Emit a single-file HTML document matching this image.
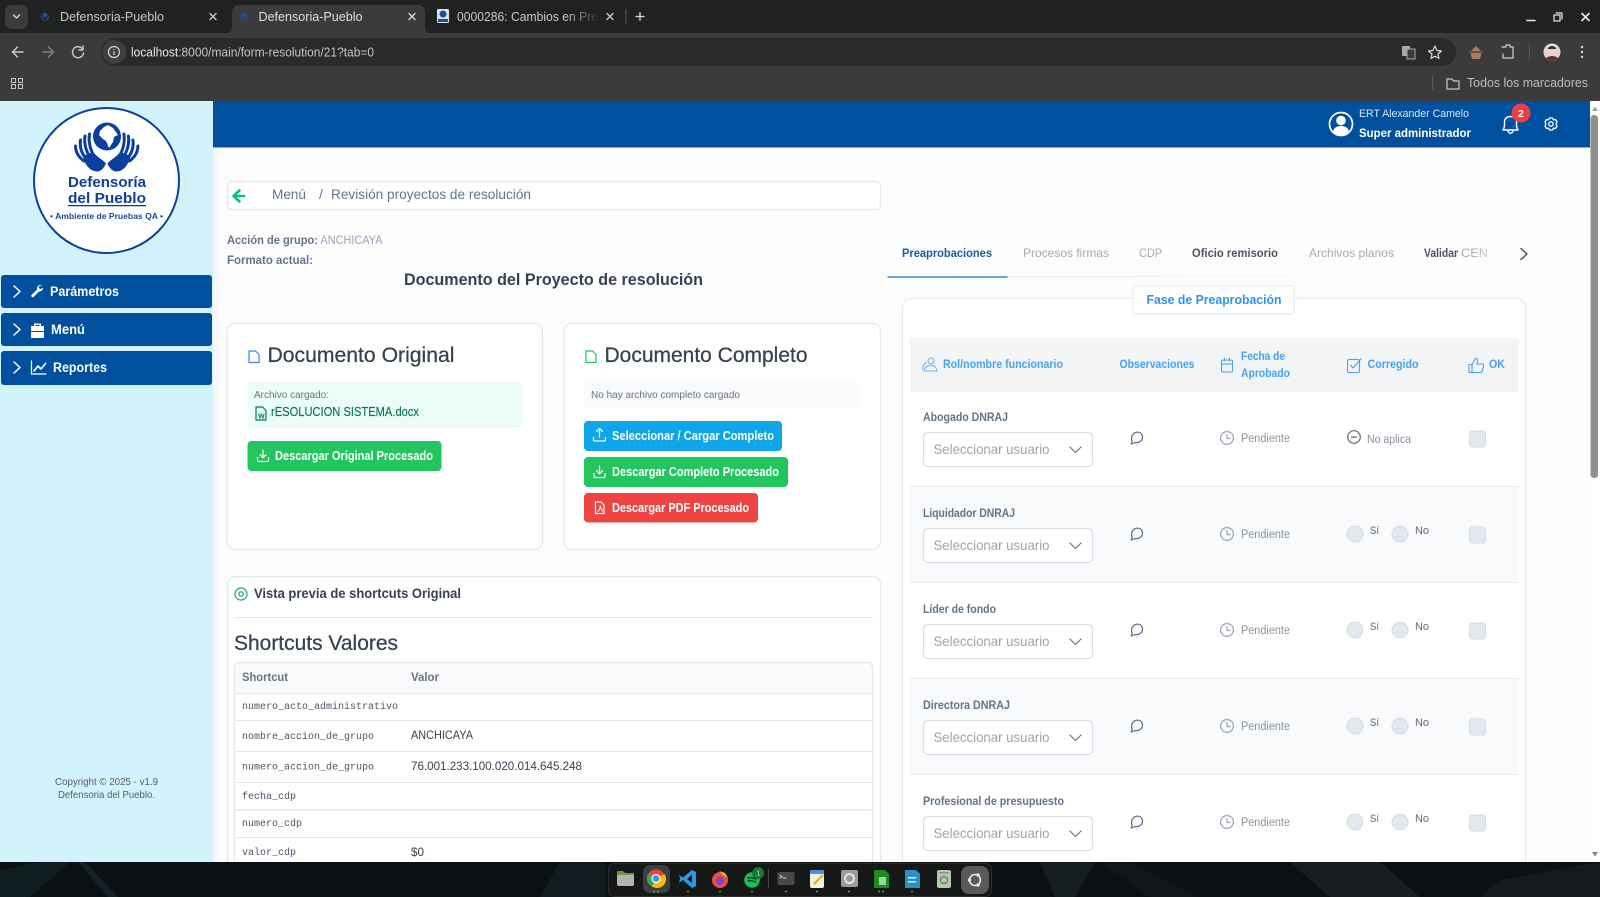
<!DOCTYPE html>
<html lang="es"><head><meta charset="utf-8"><title>Defensoria-Pueblo</title>
<style>
html,body{margin:0;padding:0;width:1600px;height:897px;overflow:hidden;background:#fff}
svg{display:block}
text{font-family:"Liberation Sans",sans-serif;white-space:pre}
.m{font-family:"Liberation Mono",monospace;font-size:10px;fill:#4b5563}
.b{font-weight:700}
.s{fill:none;stroke-linecap:round;stroke-linejoin:round}
.hd{font-size:11.5px;font-weight:700;fill:#45a2f5}
.lb{font-size:11.5px;font-weight:700;fill:#64748b}
.ph{font-size:14px;fill:#9ca3af}
.pe{font-size:11.5px;fill:#8b93a0}
.rd{font-size:11px;fill:#5f6875}
.tb{font-size:12px;font-weight:700}
.wb{font-size:12.5px;font-weight:700;fill:#fff}
.ch{font-size:12.5px;fill:#c8c8c8}
.tv{font-size:12px;fill:#374151}
</style></head><body>
<svg width="1600" height="897" viewBox="0 0 1600 897" xmlns="http://www.w3.org/2000/svg">
<defs>
<linearGradient id="fade" x1="0" x2="1"><stop offset="0" stop-color="#e5e7eb"/><stop offset="1" stop-color="#fff"/></linearGradient>
<linearGradient id="tabf" x1="0" x2="1"><stop offset="0" stop-color="#202221" stop-opacity="0"/><stop offset="1" stop-color="#202221"/></linearGradient>
<linearGradient id="cenf" x1="0" x2="1"><stop offset="0" stop-color="#fff" stop-opacity="0"/><stop offset="1" stop-color="#fff"/></linearGradient>
<g id="cm"><path class="s" stroke="#64748b" stroke-width="1.300" d="M1.600 12.400 2.600 9.400C1.200 6.200 2.600 2.200 6 1 9.600-.2 13 2 13 5.600 13 9.500 9.200 11.800 5.600 10.900 4.400 11.600 3 12.200 1.600 12.400Z"/></g>
<g id="ck"><circle cx="0" cy="0" r="6.400" fill="none" stroke="#9ca3af" stroke-width="1.200"/><path class="s" stroke="#9ca3af" stroke-width="1.200" d="M0-3.500V.5H3"/></g>
<g id="sel">
<rect x=".5" y=".5" width="169" height="34" rx="4.500" fill="#fff" stroke="#d8dee8" stroke-width="1.200"/>
<text class="ph" x="10.500" y="22" textLength="116" lengthAdjust="spacingAndGlyphs">Seleccionar usuario</text>
<path class="s" stroke="#6b7280" stroke-width="1.200" d="M147 15 152.500 20.500 158 15"/>
</g>
<g id="row">
<use href="#sel" x="923" y="432"/>
<use href="#cm" x="1129.500" y="431.500"/>
<use href="#ck" x="1227" y="438"/>
<text class="pe" x="1241" y="442" textLength="49" lengthAdjust="spacingAndGlyphs">Pendiente</text>
<rect x="1469.500" y="431" width="16" height="16" rx="2.500" fill="#e2e8f0" stroke="#d5dce6"/>
</g>
<g id="rad">
<circle cx="1355" cy="438" r="8" fill="#e2e8f0" stroke="#d5dce6"/>
<text class="rd" x="1370" y="438" textLength="9" lengthAdjust="spacingAndGlyphs">Sí</text>
<circle cx="1400" cy="438" r="8" fill="#e2e8f0" stroke="#d5dce6"/>
<text class="rd" x="1415" y="438" textLength="14" lengthAdjust="spacingAndGlyphs">No</text>
</g>
<g id="dl"><path class="s" stroke="#fff" stroke-width="1.200" d="M6 0V7.500M3 4.800 6 7.800 9 4.800M.5 7.500V10.500Q.5 11.500 1.500 11.500H10.500Q11.500 11.500 11.500 10.500V7.500"/></g>
<g id="fav"><path fill="#1b4f9c" d="M5 1.500a2.500 2.500 0 1 1 0 5 2.500 2.500 0 0 1 0-5ZM.5 4C1 7.500 2.500 10 4.800 10.500 3.500 8.500 2.800 6.500.5 4ZM9.500 4C9 7.500 7.500 10 5.200 10.500 6.500 8.500 7.200 6.500 9.500 4Z"/></g>
<g id="hand">
<path fill="#0a3f9f" d="M83 156C85 166 91 171.500 97 171.500 101 171.500 104 168 106 163.500 102 159 97 157 93 152Z"/>
<g fill="none" stroke="#0a3f9f" stroke-width="3" stroke-linecap="round">
<path d="M93.500 155C89.500 148 88.500 140 89.500 134"/>
<path d="M90 157C85.500 150 84 143 85 136"/>
<path d="M86.500 159C81 153 79.500 147 80.500 140"/>
<path d="M84 161C78.500 157 75.500 152 75.500 146"/>
</g>
</g>
</defs>

<!-- Page bg -->
<rect width="1600" height="897" fill="#fdfdfe"/>

<!-- Chrome -->
<rect width="1600" height="34" fill="#202221"/>
<rect y="33" width="1600" height="68" fill="#3b3b3b"/>
<rect x="5" y="5" width="23" height="24" rx="7" fill="#3c3c3c"/>
<path class="s" stroke="#d0d0d0" stroke-width="1.500" d="M13.500 15 16.500 18 19.500 15"/>
<use href="#fav" x="40" y="11"/>
<text class="ch" x="60" y="21" textLength="104" lengthAdjust="spacingAndGlyphs">Defensoria-Pueblo</text>
<path class="s" stroke="#c8c8c8" stroke-width="1.400" d="M210 13.500 216 19.500M216 13.500 210 19.500"/>
<path d="M224 34Q232 34 232 26V13Q232 5 240 5H417Q425 5 425 13V26Q425 34 433 34Z" fill="#3b3b3b"/>
<use href="#fav" x="239" y="11"/>
<text class="ch" x="258.500" y="21" textLength="104" lengthAdjust="spacingAndGlyphs" style="fill:#dedede">Defensoria-Pueblo</text>
<path class="s" stroke="#d8d8d8" stroke-width="1.400" d="M409 13.500 415 19.500M415 13.500 409 19.500"/>
<rect x="437" y="9" width="12" height="14" rx="1.500" fill="#d9e4f2"/><circle cx="443" cy="14" r="3.500" fill="#1b4f9c"/><rect x="438" y="19" width="10" height="3" fill="#1b4f9c"/>
<text class="ch" x="457" y="21" textLength="141" lengthAdjust="spacingAndGlyphs">0000286: Cambios en Pre</text>
<rect x="565" y="8" width="35" height="20" fill="url(#tabf)"/>
<path class="s" stroke="#c8c8c8" stroke-width="1.400" d="M607 13.500 613 19.500M613 13.500 607 19.500"/>
<rect x="625.500" y="9" width="1" height="15" fill="#5a5a5a"/>
<path class="s" stroke="#dadada" stroke-width="1.300" d="M640 12.500V20.500M636 16.500H644"/>
<path class="s" stroke="#e8e8e8" stroke-width="1.600" d="M1527 20.500H1535"/>
<rect x="1554" y="15" width="6" height="6" fill="none" stroke="#e8e8e8" stroke-width="1.200"/><path class="s" stroke="#e8e8e8" stroke-width="1.200" d="M1556 13H1562V19"/>
<path class="s" stroke="#e8e8e8" stroke-width="1.600" d="M1582 13.500 1589 20.500M1589 13.500 1582 20.500"/>

<path class="s" stroke="#c9c9c9" stroke-width="1.400" d="M23 52H13M17.500 47 12.500 52 17.500 57"/>
<path class="s" stroke="#808080" stroke-width="1.400" d="M43 52H53M48.500 47 53.500 52 48.500 57"/>
<path class="s" stroke="#c9c9c9" stroke-width="1.400" d="M82.500 49A5.500 5.500 0 1 0 83.500 53M83 46V50H79"/>
<rect x="101" y="38" width="1355" height="28" rx="14" fill="#292a2a"/>
<circle cx="114" cy="52" r="12" fill="#3f3f3f"/>
<circle cx="114" cy="52" r="5.500" fill="none" stroke="#d8d8d8" stroke-width="1.200"/><path stroke="#d8d8d8" stroke-width="1.200" d="M114 51V55M114 49V50"/>
<text x="131" y="56.500" font-size="12.500" textLength="243" lengthAdjust="spacingAndGlyphs" fill="#c4c4c4"><tspan fill="#e8e8e8">localhost</tspan>:8000/main/form-resolution/21?tab=0</text>
<rect x="1402" y="46" width="8" height="10" fill="#a8a8a8"/><rect x="1407" y="49" width="8" height="10" fill="#3a3a3a" stroke="#a8a8a8"/>
<path class="s" stroke="#d8d8d8" stroke-width="1.200" d="M1435 46 1437 50.500 1441.500 51 1438 54 1439 58.500 1435 56.200 1431 58.500 1432 54 1428.500 51 1433 50.500Z"/>
<path fill="#a8805f" d="M1470 52 1476 46 1482 52 1480 59H1472Z"/><rect x="1469" y="51" width="14" height="2" fill="#6d4a3a"/>
<path class="s" stroke="#cfcfcf" stroke-width="1.200" d="M1502 47H1506V45H1510V47H1513V58H1503V54"/>
<rect x="1529" y="44" width="1" height="16" fill="#555"/>
<circle cx="1552" cy="52" r="8.500" fill="#e6d6cc"/><path fill="#6b2a2a" d="M1546 58Q1552 54 1558 58 1552 63 1546 58Z"/><path fill="#3a2a24" d="M1548 48Q1552 44 1556 48V49H1548Z"/>
<circle cx="1582" cy="47" r="1.200" fill="#d5d5d5"/><circle cx="1582" cy="52" r="1.200" fill="#d5d5d5"/><circle cx="1582" cy="57" r="1.200" fill="#d5d5d5"/>

<g fill="none" stroke="#c8c8c8" stroke-width="1"><rect x="11.500" y="78.500" width="4" height="4"/><rect x="18.500" y="78.500" width="4" height="4"/><rect x="11.500" y="84.500" width="4" height="4"/><rect x="18.500" y="84.500" width="4" height="4"/></g>
<rect x="1432" y="76" width="1" height="14" fill="#5a5a5a"/>
<path class="s" stroke="#c8c8c8" stroke-width="1.200" d="M1447 79H1452L1453.500 81H1459V89H1447Z"/>
<text x="1467" y="87" font-size="12.500" fill="#bdbdbd" textLength="121" lengthAdjust="spacingAndGlyphs">Todos los marcadores</text>

<!-- Sidebar -->
<rect x="0" y="101" width="213" height="761" fill="#d3f3fc"/>
<rect x="213" y="147" width="6" height="715" fill="#f7f7fa"/>
<!-- Logo -->
<circle cx="106.500" cy="180.500" r="72.500" fill="#fff" stroke="#0f3f9b" stroke-width="2"/>
<use href="#hand"/>
<use href="#hand" transform="translate(213.400 0) scale(-1 1)"/>
<circle cx="107" cy="136.500" r="14" fill="#0a3f9f"/>
<path fill="#fff" d="M104 127 108 125 113 128 118 135 114 137 113 142 109 148 106 141 103 139 99 135 100 131Z"/>
<text x="68" y="187" font-size="15" class="b" fill="#0f3f9b" textLength="78" lengthAdjust="spacingAndGlyphs">Defensoría</text>
<text x="68" y="203" font-size="15" class="b" fill="#0f3f9b" textLength="78" lengthAdjust="spacingAndGlyphs">del Pueblo</text>
<rect x="68" y="205" width="78" height="1.300" fill="#0f3f9b"/>
<text x="50" y="219" font-size="8" class="b" fill="#1a4a9f" textLength="113" lengthAdjust="spacingAndGlyphs">• Ambiente de Pruebas QA •</text>

<g fill="#00509d">
<rect x="1" y="275" width="211" height="33" rx="3"/>
<rect x="1" y="313" width="211" height="33" rx="3"/>
<rect x="1" y="351" width="211" height="34" rx="3"/>
</g>
<g class="s" stroke="#fff" stroke-width="1.500" fill="none">
<path d="M14 286 20 291.500 14 297"/><path d="M14 324 20 329.500 14 335"/><path d="M14 362 20 367.500 14 373"/>
</g>
<path fill="#fff" d="M42 285C39.500 284.300 37 286 37 288.500L37 289.600 31.500 295C30.500 296 32.500 298 33.500 297L39 291.500C41 291.700 43 290 43.200 287.500L41 289 39 288.500 38.800 286.500Z"/>
<text x="50" y="296" font-size="13.500" class="b" fill="#fff" textLength="69" lengthAdjust="spacingAndGlyphs">Parámetros</text>
<path fill="#fff" d="M31 326H44V338H31ZM34 326V323.500H41V326H39.500V325H35.500V326Z"/><rect x="31" y="331" width="13" height="1" fill="#00509d"/>
<text x="51" y="334" font-size="13.500" class="b" fill="#fff" textLength="34" lengthAdjust="spacingAndGlyphs">Menú</text>
<path class="s" stroke="#fff" stroke-width="1.200" d="M31.500 361V374H46"/><path class="s" stroke="#fff" stroke-width="1.600" d="M34 371 38 366 41 369 45.500 363.500"/>
<text x="53" y="372" font-size="13.500" class="b" fill="#fff" textLength="54" lengthAdjust="spacingAndGlyphs">Reportes</text>

<text x="55" y="785" font-size="10" fill="#555c64" textLength="103" lengthAdjust="spacingAndGlyphs">Copyright © 2025 - v1.9</text>
<text x="58" y="798" font-size="10" fill="#555c64" textLength="97" lengthAdjust="spacingAndGlyphs">Defensoria del Pueblo.</text>

<!-- Top header -->
<rect x="213" y="101" width="1377" height="46" fill="#00509d"/>
<rect x="213" y="147" width="1377" height="1" fill="#7db0dd"/>
<circle cx="1341" cy="124" r="11.500" fill="#00509d" stroke="#fff" stroke-width="1.700"/>
<circle cx="1341" cy="120.500" r="4.800" fill="#fff"/>
<path fill="#fff" d="M1333 131.500C1334 127 1338 126 1341 126 1344 126 1348 127 1349 131.500 1345 136 1337 136 1333 131.500Z"/>
<text x="1359" y="117" font-size="11" fill="#d8e6f4" textLength="110" lengthAdjust="spacingAndGlyphs">ERT Alexander Camelo</text>
<text x="1359" y="137" font-size="12" class="b" fill="#fff" textLength="112" lengthAdjust="spacingAndGlyphs">Super administrador</text>
<path class="s" stroke="#fff" stroke-width="1.400" d="M1503 130C1505 127 1504.500 124 1504.500 122 1504.500 118.500 1507 116.500 1510.500 116.500 1514 116.500 1516.500 118.500 1516.500 122 1516.500 124 1516 127 1518 130ZM1508 130.500C1508 134 1513 134 1513 130.500"/>
<circle cx="1521" cy="113" r="9.500" fill="#ef3e42"/>
<text x="1518" y="117" font-size="10.500" class="b" fill="#fff">2</text>
<circle cx="1551" cy="124" r="2.200" fill="none" stroke="#fff" stroke-width="1.300"/>
<path class="s" stroke="#fff" stroke-width="1.300" d="M1549.500 118H1552.500L1553.500 119.800 1555.500 119.500 1557 122 1556 124 1557 126 1555.500 128.500 1553.500 128.200 1552.500 130H1549.500L1548.500 128.200 1546.500 128.500 1545 126 1546 124 1545 122 1546.500 119.500 1548.500 119.800Z"/>

<!-- Breadcrumb -->
<rect x="227.500" y="181.500" width="653" height="28" rx="4" fill="#fff" stroke="#e5e7eb" stroke-width="1.200"/>
<path class="s" stroke="#10b981" stroke-width="2.600" d="M244 196H234.500M239.500 190.500 233.500 196 239.500 201.500"/>
<text x="272" y="199" font-size="14" fill="#64748b" textLength="34" lengthAdjust="spacingAndGlyphs">Menú</text>
<text x="319" y="199" font-size="14" fill="#64748b">/</text>
<text x="331" y="199" font-size="14" fill="#64748b" textLength="200" lengthAdjust="spacingAndGlyphs">Revisión proyectos de resolución</text>
<text x="227" y="244" font-size="12" font-weight="700" fill="#64748b" textLength="91" lengthAdjust="spacingAndGlyphs">Acción de grupo:</text>
<text x="320.500" y="244" font-size="12" fill="#94a3b8" textLength="62" lengthAdjust="spacingAndGlyphs">ANCHICAYA</text>
<text x="227" y="264" font-size="12" font-weight="700" fill="#64748b" textLength="86" lengthAdjust="spacingAndGlyphs">Formato actual:</text>
<text x="404" y="285" font-size="17" font-weight="700" fill="#374151" textLength="299" lengthAdjust="spacingAndGlyphs">Documento del Proyecto de resolución</text>

<!-- Card 1 -->
<rect x="227" y="323.500" width="315.500" height="226" rx="8" fill="#fff" stroke="#e5e7eb" stroke-width="1.200"/>
<path class="s" stroke="#3b82f6" stroke-width="1.200" d="M249 351H255.500L259 354.500V362.500H249Z"/>
<text x="267.500" y="362" font-size="21" fill="#374151" stroke="#374151" stroke-width=".25" textLength="187" lengthAdjust="spacingAndGlyphs">Documento Original</text>
<rect x="247.500" y="381" width="275" height="47" rx="5" fill="#ecfdf5"/>
<text x="254" y="398" font-size="10.500" fill="#6b7280" textLength="75" lengthAdjust="spacingAndGlyphs">Archivo cargado:</text>
<path class="s" stroke="#047857" stroke-width="1.200" d="M256 407H262.500L266 410.500V420H256Z"/><text x="258" y="418.500" font-size="7" class="b" fill="#047857">W</text>
<text x="271" y="416" font-size="12.500" fill="#047857" stroke="#047857" stroke-width=".15" textLength="148" lengthAdjust="spacingAndGlyphs">rESOLUCION SISTEMA.docx</text>
<rect x="247.500" y="441" width="194" height="30" rx="4" fill="#22c55e"/>
<use href="#dl" x="257" y="450"/>
<text class="wb" x="275" y="460" textLength="158" lengthAdjust="spacingAndGlyphs">Descargar Original Procesado</text>

<!-- Card 2 -->
<rect x="564" y="323.500" width="316.500" height="226" rx="8" fill="#fff" stroke="#e5e7eb" stroke-width="1.200"/>
<path class="s" stroke="#22c55e" stroke-width="1.200" d="M586 351H592.500L596 354.500V362.500H586Z"/>
<text x="604.500" y="362" font-size="21" fill="#374151" stroke="#374151" stroke-width=".25" textLength="203" lengthAdjust="spacingAndGlyphs">Documento Completo</text>
<rect x="584" y="381" width="276" height="27" rx="5" fill="#f9fafb"/>
<text x="591" y="398" font-size="10.500" fill="#6b7280" textLength="149" lengthAdjust="spacingAndGlyphs">No hay archivo completo cargado</text>
<rect x="584" y="421" width="198" height="30" rx="4" fill="#0ea5e9"/>
<path class="s" stroke="#fff" stroke-width="1.200" d="M599.500 437V429M596.500 431.500 599.500 428.500 602.500 431.500M593.500 437.500V440Q593.500 441 594.500 441H604.500Q605.500 441 605.500 440V437.500"/>
<text class="wb" x="612" y="440" textLength="162" lengthAdjust="spacingAndGlyphs">Seleccionar / Cargar Completo</text>
<rect x="584" y="457" width="204" height="30" rx="4" fill="#22c55e"/>
<use href="#dl" x="593.500" y="466"/>
<text class="wb" x="612" y="476" textLength="167" lengthAdjust="spacingAndGlyphs">Descargar Completo Procesado</text>
<rect x="584" y="493" width="174" height="29.500" rx="4" fill="#ef4444"/>
<path class="s" stroke="#fff" stroke-width="1.200" d="M595.500 502H601L604 505V513.500H595.500Z"/><path class="s" stroke="#fff" stroke-width=".9" d="M598 511.500C600 509 600.500 507 600 505.500 601 508 601.500 510 602.500 511"/>
<text class="wb" x="612" y="512" textLength="137" lengthAdjust="spacingAndGlyphs">Descargar PDF Procesado</text>

<!-- Preview card -->
<rect x="227.500" y="576.500" width="653" height="320" rx="8" fill="#fff" stroke="#e5e7eb" stroke-width="1.200"/>
<circle cx="241" cy="594" r="6" fill="none" stroke="#10a372" stroke-width="1.200"/><circle cx="241" cy="594" r="2.200" fill="none" stroke="#10a372" stroke-width="1.200"/>
<text x="254" y="598" font-size="14" font-weight="700" fill="#374151" textLength="207" lengthAdjust="spacingAndGlyphs">Vista previa de shortcuts Original</text>
<rect x="234" y="617" width="639" height="1" fill="#e5e7eb"/>
<text x="234" y="650" font-size="21" fill="#374151" stroke="#374151" stroke-width=".25" textLength="164" lengthAdjust="spacingAndGlyphs">Shortcuts Valores</text>
<path d="M234.500 693V668Q234.500 662.500 240 662.500H867Q872.500 662.500 872.500 668V693Z" fill="#f9fafb"/>
<path fill="none" stroke="#e5e7eb" stroke-width="1.200" d="M234.500 897V668Q234.500 662.500 240 662.500H867Q872.500 662.500 872.500 668V897"/>
<g fill="#e5e7eb"><rect x="235" y="693" width="637" height="1"/><rect x="235" y="720" width="637" height="1"/><rect x="235" y="751" width="637" height="1"/><rect x="235" y="782" width="637" height="1"/><rect x="235" y="809" width="637" height="1.500"/><rect x="235" y="837" width="637" height="1"/></g>
<text x="242" y="681" font-size="12" font-weight="700" fill="#6b7280" textLength="46" lengthAdjust="spacingAndGlyphs">Shortcut</text>
<text x="411" y="681" font-size="12" font-weight="700" fill="#6b7280" textLength="28" lengthAdjust="spacingAndGlyphs">Valor</text>
<text class="m" x="242" y="709">numero_acto_administrativo</text>
<text class="m" x="242" y="739">nombre_accion_de_grupo</text>
<text class="tv" x="411" y="739" textLength="62" lengthAdjust="spacingAndGlyphs">ANCHICAYA</text>
<text class="m" x="242" y="769.500">numero_accion_de_grupo</text>
<text class="tv" x="411" y="770" textLength="171" lengthAdjust="spacingAndGlyphs">76.001.233.100.020.014.645.248</text>
<text class="m" x="242" y="799">fecha_cdp</text>
<text class="m" x="242" y="826">numero_cdp</text>
<text class="m" x="242" y="855">valor_cdp</text>
<text class="tv" x="411" y="856" textLength="13" lengthAdjust="spacingAndGlyphs">$0</text>

<!-- Tabs -->
<text x="902" y="257" class="tb" fill="#1d5a9e" textLength="90" lengthAdjust="spacingAndGlyphs">Preaprobaciones</text>
<text x="1023" y="257" class="tb" fill="#a3a9b3" style="font-weight:400" textLength="86" lengthAdjust="spacingAndGlyphs">Procesos firmas</text>
<text x="1139" y="257" class="tb" fill="#a3a9b3" style="font-weight:400" textLength="23" lengthAdjust="spacingAndGlyphs">CDP</text>
<text x="1192" y="257" class="tb" fill="#4b5563" textLength="86" lengthAdjust="spacingAndGlyphs">Oficio remisorio</text>
<text x="1309" y="257" class="tb" fill="#a3a9b3" style="font-weight:400" textLength="85" lengthAdjust="spacingAndGlyphs">Archivos planos</text>
<text x="1424" y="257" class="tb" fill="#4b5563" textLength="34" lengthAdjust="spacingAndGlyphs">Validar</text>
<text x="1461" y="257" class="tb" fill="#a3a9b3" style="font-weight:400" textLength="27" lengthAdjust="spacingAndGlyphs">CEN</text>
<rect x="1470" y="245" width="20" height="16" fill="url(#cenf)" opacity=".5"/>
<path class="s" stroke="#4b5563" stroke-width="1.500" d="M1521 248.500 1527 254 1521 259.500"/>
<rect x="888" y="276" width="620" height="1" fill="url(#fade)"/>
<rect x="887.500" y="276" width="120" height="2" fill="#6aa3d8"/>

<!-- Fieldset -->
<rect x="902.500" y="298" width="623" height="610" rx="10" fill="#fff" stroke="#e3ebf3" stroke-width="1.200"/>
<rect x="1133" y="286" width="161" height="28" rx="3" fill="#fff" stroke="#e3ebf3" stroke-width="1.200"/>
<text x="1146.500" y="304" font-size="12.500" font-weight="700" fill="#2f93ee" textLength="135" lengthAdjust="spacingAndGlyphs">Fase de Preaprobación</text>
<rect x="910" y="338" width="608.500" height="54" fill="#f3f4f6"/>

<g class="s" stroke="#6cb4f6" stroke-width="1.100">
<circle cx="931" cy="361" r="3"/><path d="M924 371C924.500 367 927.500 365.500 931 365.500 934 365.500 936.500 367 937 371ZM926 362.500C924 363.500 923 366 922.500 369"/>
<rect x="1221.500" y="360" width="11" height="12" rx="1.500" stroke="#45a2f5"/><path stroke="#45a2f5" d="M1221.500 364H1232.500M1224.500 358V361M1229.500 358V361"/>
<rect x="1347.500" y="359.500" width="12" height="13" rx="1.500" stroke="#45a2f5"/><path stroke="#45a2f5" d="M1350.500 365 1353 368 1361 359"/>
<path stroke="#45a2f5" d="M1469 372.500H1472V364.500H1469ZM1472 364.500 1475.500 358.500C1477 358 1478 359.500 1477.500 361L1477 364H1482Q1484 364 1483.500 366L1482 371.500Q1481.500 372.500 1480 372.500H1472"/>
</g>
<text class="hd" x="943" y="368" textLength="120" lengthAdjust="spacingAndGlyphs">Rol/nombre funcionario</text>
<text class="hd" x="1119.500" y="368" textLength="75" lengthAdjust="spacingAndGlyphs">Observaciones</text>
<text class="hd" x="1241" y="360" textLength="44" lengthAdjust="spacingAndGlyphs">Fecha de</text>
<text class="hd" x="1241" y="377" textLength="49" lengthAdjust="spacingAndGlyphs">Aprobado</text>
<text class="hd" x="1367.500" y="368" textLength="51" lengthAdjust="spacingAndGlyphs">Corregido</text>
<text class="hd" x="1489" y="368" textLength="16" lengthAdjust="spacingAndGlyphs">OK</text>

<!-- Rows -->
<rect x="910" y="487" width="608.500" height="95" fill="#f9fafb"/>
<rect x="910" y="679" width="608.500" height="95" fill="#f9fafb"/>
<g fill="#e9edf2"><rect x="910" y="486" width="608.500" height="1"/><rect x="910" y="582" width="608.500" height="1"/><rect x="910" y="678" width="608.500" height="1"/><rect x="910" y="774" width="608.500" height="1"/></g>

<text class="lb" x="923" y="421" textLength="85" lengthAdjust="spacingAndGlyphs">Abogado DNRAJ</text>
<use href="#row"/>
<circle cx="1354" cy="437" r="6.300" fill="none" stroke="#5f6875" stroke-width="1.200"/><rect x="1351" y="436.500" width="6" height="1.200" fill="#5f6875"/>
<text class="pe" x="1367" y="443" textLength="44" lengthAdjust="spacingAndGlyphs">No aplica</text>

<text class="lb" x="923" y="517" textLength="92" lengthAdjust="spacingAndGlyphs">Liquidador DNRAJ</text>
<use href="#row" y="96"/><use href="#rad" y="96"/>

<text class="lb" x="923" y="613" textLength="73" lengthAdjust="spacingAndGlyphs">Líder de fondo</text>
<use href="#row" y="192"/><use href="#rad" y="192"/>

<text class="lb" x="923" y="709" textLength="87" lengthAdjust="spacingAndGlyphs">Directora DNRAJ</text>
<use href="#row" y="288"/><use href="#rad" y="288"/>

<text class="lb" x="923" y="805" textLength="141" lengthAdjust="spacingAndGlyphs">Profesional de presupuesto</text>
<use href="#row" y="384"/><use href="#rad" y="384"/>

<!-- Scrollbar -->
<rect x="1590" y="101" width="10" height="761" fill="#fff"/>
<path d="M1592 111 1595 106.500 1598 111Z" fill="#a0a0a0"/>
<rect x="1590.500" y="115" width="7.500" height="363" rx="3.500" fill="#8f8f8f"/>
<path d="M1592 852 1595 856.500 1598 852Z" fill="#808080"/>

<!-- Desktop/taskbar -->
<rect y="862" width="1600" height="35" fill="#0a1013"/>
<g opacity=".55">
<path d="M0 870 40 862H70L30 897H0Z" fill="#14262c"/><path d="M85 862 118 897H108L78 862Z" fill="#1d3238"/><path d="M560 862H605V897H540Z" fill="#16262b"/><path d="M1040 862 1055 897H1075L1095 862Z" fill="#202a2e"/><path d="M1100 862 1150 897H1200L1130 862Z" fill="#151a1c"/><path d="M1290 862 1330 897H1420L1380 862Z" fill="#22282b"/><path d="M1500 880 1600 862V897H1480Z" fill="#1d2326"/>
</g>
<rect x="608.500" y="863.500" width="383" height="33" rx="6" fill="#161817" stroke="#2c2e2e"/>
<rect x="643" y="865" width="27" height="28" rx="7" fill="#3c3e3f"/>
<rect x="961" y="866" width="28" height="28" rx="8" fill="#5a5a5a"/>
<!-- files -->
<rect x="617" y="873" width="17" height="13" rx="2" fill="#b5b5b0"/><path d="M617 875V872Q617 871 618 871H623L625 873H634V875Z" fill="#6b9b3a"/>
<!-- chrome -->
<circle cx="656" cy="878.500" r="9" fill="#ea4335"/><path d="M656 878.500 648 874A9 9 0 0 0 652 886.500Z" fill="#34a853"/><path d="M656 878.500 652 886.500A9 9 0 0 0 664.500 874Z" fill="#fbbc05"/><circle cx="656" cy="878.500" r="4" fill="#4a90e2" stroke="#fff" stroke-width="1.200"/>
<!-- vscode -->
<path d="M692 870 696 872V886L692 888 683 880 679 883 680 879 680 878 679 875 683 877.500Z" fill="#2a9be0"/><path d="M692 874.500V883L687 879Z" fill="#161817"/>
<!-- firefox -->
<circle cx="720" cy="880" r="8" fill="#e8503a"/><circle cx="720" cy="881" r="4" fill="#7542d1"/><path d="M719 871 725 873 728 878 723 875Z" fill="#f9b233"/>
<!-- spotify -->
<circle cx="752" cy="880" r="7.800" fill="#1db954"/><circle cx="758" cy="873" r="6" fill="#127a36"/><text x="756.500" y="875.500" font-size="7" fill="#cfe8d6">1</text><path class="s" stroke="#161817" stroke-width="1.200" d="M748 878Q752 877 756 879M748.500 881Q752 880 755.500 882"/>
<rect x="768" y="869" width="1" height="19" fill="#444"/>
<!-- terminal -->
<rect x="777.500" y="872" width="17" height="13" rx="2" fill="#484848"/><path class="s" stroke="#ddd" stroke-width=".9" d="M780 875 782 876.500 780 878M783 878H786"/>
<!-- notes -->
<rect x="810" y="870" width="14" height="18" rx="2" fill="#f2efe3"/><rect x="810" y="870" width="14" height="4" rx="1" fill="#4a8fe0"/><path stroke="#e8a62c" stroke-width="2" d="M814 884 823 875"/>
<!-- settings -->
<rect x="841" y="870" width="17" height="17" rx="2" fill="#9b9b9b"/><circle cx="849.500" cy="878.500" r="4.500" fill="none" stroke="#e8e8e8" stroke-width="1.800"/>
<!-- calc -->
<path d="M874 870H885L889 874V888H874Z" fill="#1f8a22"/><rect x="879" y="877" width="7" height="8" fill="#9ad69c"/>
<!-- writer -->
<path d="M905 870H916L920 874V888H905Z" fill="#2c8fc8"/><rect x="908" y="877" width="8" height="1.500" fill="#d8eaf5"/><rect x="908" y="881" width="8" height="1.500" fill="#d8eaf5"/>
<!-- trash -->
<rect x="937" y="870" width="14" height="18" rx="2" fill="#bfc1bb"/><circle cx="944" cy="880" r="3.500" fill="none" stroke="#4e9f50" stroke-width="1.600"/><rect x="939" y="872" width="10" height="1.500" fill="#8f918c"/>
<!-- ubuntu -->
<circle cx="975" cy="880" r="5.500" fill="none" stroke="#eee" stroke-width="1.500"/><circle cx="969.500" cy="880" r="1.600" fill="#eee"/><circle cx="978" cy="875" r="1.600" fill="#eee"/><circle cx="978" cy="885" r="1.600" fill="#eee"/>
<g fill="#6cc04a"><circle cx="654" cy="891.500" r=".9"/><circle cx="658" cy="891.500" r=".9"/><circle cx="688" cy="891.500" r=".9"/><circle cx="720" cy="891.500" r=".9"/><circle cx="752" cy="891.500" r=".9"/><circle cx="786" cy="891.500" r=".9"/><circle cx="817" cy="891.500" r=".9"/><circle cx="849" cy="891.500" r=".9"/><circle cx="879" cy="891.500" r=".9"/><circle cx="883" cy="891.500" r=".9"/><circle cx="912" cy="891.500" r=".9"/></g>
</svg>
</body></html>
